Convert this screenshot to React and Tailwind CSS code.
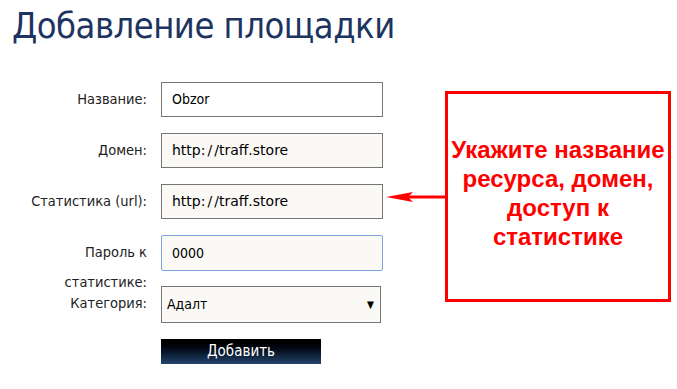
export default function App() {
  const labelCls =
    "h-[35px] pt-[2px] text-right text-[14.5px] leading-[30px] text-[#222] whitespace-normal";
  const inputCls =
    "h-[35px] w-[222px] border border-[#767676] px-[10px] flex items-center text-[14px] text-black";

  const url = (
    <span className="font-['DejaVu_Sans',sans-serif] text-[14px]">
      http:<span className="mx-[2px]">/</span>/traff.store
    </span>
  );

  return (
    <div className="w-[677px] h-[389px] bg-white overflow-hidden font-['DejaVu_Sans_Condensed','DejaVu_Sans',sans-serif]">
      <h1 className="pl-[12px] pt-[3px] text-[36px] tracking-[-0.5px] leading-[46px] text-[#1d3461]">
        Добавление площадки
      </h1>

      <div className="flex mt-[33px]">
        <div className="grid grid-cols-[147px_222px] gap-x-[14px] gap-y-[16px] content-start">
          <div className={labelCls}>Название:</div>
          <div className={inputCls + " bg-white"}>Obzor</div>

          <div className={labelCls}>Домен:</div>
          <div className={inputCls + " bg-[#faf9f6]"}>{url}</div>

          <div className={labelCls}>Статистика (url):</div>
          <div className={inputCls + " bg-[#faf9f6]"}>{url}</div>

          <div className={labelCls + " h-[36px]"}>
            <div className="w-[100px] ml-auto">Пароль к статистике:</div>
          </div>
          <div className="h-[36px] w-[222px] border border-[#7da2dc] rounded-[2px] px-[10px] flex items-center text-[14px] text-black bg-[#faf9f6]">
            0000
          </div>

          <div className={labelCls + " -mt-[1px]"}>Категория:</div>
          <div className="-mt-[1px] h-[37px] w-[220px] border border-[#767676] pl-[5px] pr-[6px] flex items-center justify-between text-[14px] text-black bg-[#faf9f6]">
            <span>Адалт</span>
            <span className="text-[10px]">▼</span>
          </div>

          <div></div>
          <button className="h-[25px] w-[160px] bg-gradient-to-b from-[#000000] to-[#24456e] text-white text-[15px] leading-[25px]">
            Добавить
          </button>
        </div>

        <div className="flex items-center self-start mt-[9px] ml-[3px]">
          <svg width="59" height="12" viewBox="0 0 59 12" className="block">
            <line x1="20" y1="6" x2="59" y2="6" stroke="#ff0000" strokeWidth="3" />
            <polygon points="0,6 27,1 22,6 27,11" fill="#ff0000" />
          </svg>
          <div className="w-[226px] h-[211px] border-[3px] border-[#ff0000] flex items-center justify-center pb-[8px]">
            <p className="text-center text-[24px] leading-[29px] font-bold text-[#ff0000] font-['Liberation_Sans',Arial,sans-serif]">
              Укажите название
              <br />
              ресурса, домен,
              <br />
              доступ к
              <br />
              статистике
            </p>
          </div>
        </div>
      </div>
    </div>
  );
}
